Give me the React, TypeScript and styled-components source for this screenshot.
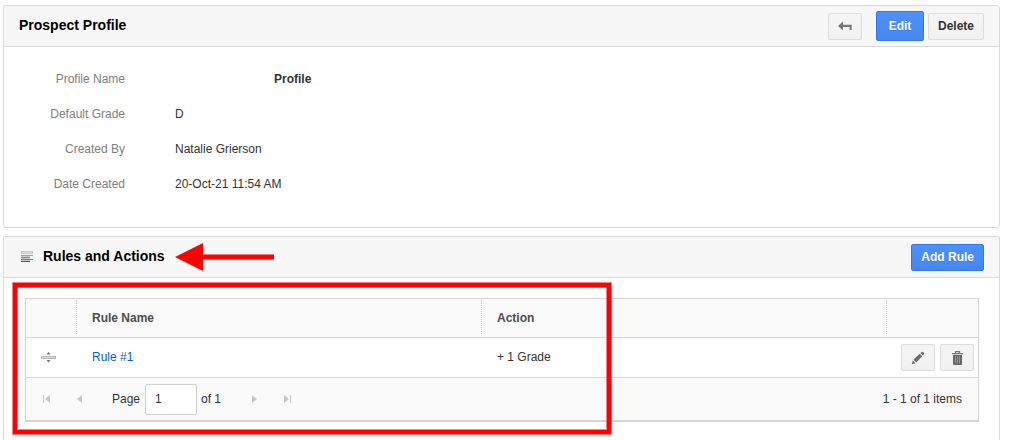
import React from "react";
import styled, { createGlobalStyle } from "styled-components";

const GlobalStyle = createGlobalStyle`
  *, *::before, *::after { box-sizing: border-box; }
  body {
    margin: 0;
    background: #fff;
    color: #333;
    font: 12px/16px "Liberation Sans", Arial, Helvetica, sans-serif;
  }
`;

const Page = styled.main`
  display: flex;
  flex-direction: column;
  gap: 8px;
  min-height: 100vh;
  padding: 5px 10px 0 3px;
`;

const Panel = styled.section<{ $open?: boolean }>`
  border: 1px solid #d9d9d9;
  border-radius: 3px;
  ${(p) => p.$open && "flex: 1; border-bottom: 0; border-bottom-left-radius: 0; border-bottom-right-radius: 0;"}
`;

const PanelHeader = styled.header`
  display: flex;
  align-items: center;
  height: 41px;
  padding: 0 15px;
  background: #f7f7f7;
  border-bottom: 1px solid #d9d9d9;
  border-radius: 2px 2px 0 0;
`;

const Title = styled.h2`
  margin: 0;
  padding-bottom: 2px;
  color: #000;
  font-size: 14px;
  line-height: 20px;
  font-weight: bold;
`;

const ListIcon = styled.svg`
  margin: 0 9px 0 2px;
`;

const Arrow = styled.svg`
  margin-left: 10px;
`;

const Actions = styled.div`
  display: flex;
  align-items: center;
  gap: 4px;
  margin-left: auto;
`;

const Button = styled.button<{ $primary?: boolean; $tall?: boolean }>`
  display: inline-flex;
  align-items: center;
  justify-content: center;
  height: ${(p) => (p.$tall ? 30 : 27)}px;
  padding: 0 9px;
  border: 1px solid ${(p) => (p.$primary ? "#3079ed" : "#dcdcdc")};
  border-radius: 2px;
  background: ${(p) =>
    p.$primary
      ? "linear-gradient(#4d90fe, #4787ed)"
      : "linear-gradient(#f5f5f5, #f1f1f1)"};
  color: ${(p) => (p.$primary ? "#fff" : "#333")};
  font: bold 12px/16px "Liberation Sans", Arial, Helvetica, sans-serif;
  white-space: nowrap;
  cursor: pointer;
  ${(p) => p.$primary && "text-shadow: 0 1px rgba(0, 0, 0, 0.1);"}
  ${(p) => p.$tall && "min-width: 48px; padding: 0 11px;"}
`;

const IconButton = styled(Button)`
  width: 34px;
  padding: 0;
`;

const BackButton = styled(IconButton)`
  margin-right: 10px;
`;

const Details = styled.dl`
  display: grid;
  grid-template-columns: 121px 1fr;
  column-gap: 50px;
  margin: 0;
  padding: 15px 0 25px;
  line-height: 35px;
`;

const Label = styled.dt`
  color: #808080;
  text-align: right;
`;

const Value = styled.dd`
  margin: 0;
`;

const ProfileName = styled.strong`
  margin-left: 99px;
`;

const PanelBody = styled.div`
  position: relative;
  padding: 20px 20px 0 21px;
`;

const Grid = styled.div`
  border: 1px solid #d5d5d5;
  border-bottom-width: 2px;
`;

const Table = styled.table`
  width: 100%;
  table-layout: fixed;
  border-collapse: separate;
  border-spacing: 0;
`;

const IconCol = styled.col`
  width: 51px;
`;

const ToolsCol = styled.col`
  width: 91px;
`;

const Th = styled.th`
  height: 39px;
  padding: 1px 0 3px;
  background: #fafafa;
  border-bottom: 1px solid #d5d5d5;
  color: #4d4d4d;
  text-align: left;

  & > div {
    display: flex;
    align-items: center;
    height: 34px;
    padding: 2px 15px 0;
    border-right: 1px dotted #ccc;
  }
  &:last-child > div {
    border-right: 0;
  }
`;

const Td = styled.td`
  height: 40px;
  padding: 0 15px;
  border-bottom: 1px solid #d9d9d9;
`;

const TextTd = styled(Td)`
  padding-bottom: 2px;
`;

const ToolsTd = styled(Td)`
  padding: 0 4px;
`;

const Tools = styled.div`
  display: flex;
  justify-content: flex-end;
  gap: 5px;
`;

const DragHandle = styled.svg`
  display: block;
`;

const Link = styled.a`
  color: #0b5cc4;
  text-decoration: none;
`;

const Pager = styled.nav`
  display: flex;
  align-items: center;
  height: 42px;
  padding: 0 16px 0 4px;
  background: #fafafa;
`;

const PagerButton = styled.button`
  display: flex;
  align-items: center;
  justify-content: center;
  width: 33px;
  height: 28px;
  padding: 0;
  border: 0;
  background: none;
`;

const PageLabel = styled.label`
  display: flex;
  align-items: center;
  gap: 5px;
  margin: 0 4px 0 16px;
`;

const PageInput = styled.input`
  width: 52px;
  height: 31px;
  padding: 0 9px;
  border: 1px solid #d0d0d0;
  border-radius: 2px;
  background: #fff;
  color: #333;
  font: 12px/16px "Liberation Sans", Arial, Helvetica, sans-serif;
`;

const PageTotal = styled.span`
  margin-right: 16px;
`;

const ItemCount = styled.span`
  margin-left: auto;
`;

const Highlight = styled.div`
  position: absolute;
  top: 5px;
  left: 9px;
  width: 598px;
  height: 151px;
  border: 4px solid #f00;
  box-shadow: 0 0 0 1px rgba(255, 0, 0, 0.5), inset 0 0 0 1px rgba(255, 0, 0, 0.5);
  pointer-events: none;
`;

const details = [
  { label: "Default Grade", value: "D" },
  { label: "Created By", value: "Natalie Grierson" },
  { label: "Date Created", value: "20-Oct-21 11:54 AM" },
];

function PagerIcon({ d, bar }: { d: string; bar?: number }) {
  return (
    <svg width="10" height="10" viewBox="0 0 10 10" fill="#c8c8c8" aria-hidden="true">
      <path d={d} />
      {bar !== undefined && <rect x={bar} y="1" width="1" height="8" />}
    </svg>
  );
}

export default function App() {
  return (
    <>
      <GlobalStyle />
      <Page>
        <Panel>
          <PanelHeader>
            <Title>Prospect Profile</Title>
            <Actions>
              <BackButton aria-label="Back">
                <svg width="16" height="12" viewBox="0 0 16 12" aria-hidden="true">
                  <path d="M1 6 6 1.5V4.7H14.7V10H12.6V7H6V10.5Z" fill="#777" />
                </svg>
              </BackButton>
              <Button $primary $tall>Edit</Button>
              <Button>Delete</Button>
            </Actions>
          </PanelHeader>
          <Details>
            <Label>Profile Name</Label>
            <Value>
              <ProfileName>Profile</ProfileName>
            </Value>
            {details.map((d) => (
              <React.Fragment key={d.label}>
                <Label>{d.label}</Label>
                <Value>{d.value}</Value>
              </React.Fragment>
            ))}
          </Details>
        </Panel>

        <Panel $open>
          <PanelHeader>
            <ListIcon width="13" height="12" viewBox="0 0 13 12" aria-hidden="true">
              <rect x="0.5" y="0.5" width="11" height="2" fill="#e4e4e4" stroke="#c8c8c8" />
              <path d="M0 4.5H12" stroke="#a0a0a0" />
              <path d="M0 6.5H9" stroke="#8c8c8c" />
              <path d="M0 8.5H12" stroke="#777" />
              <path d="M0 10.5H9" stroke="#555" />
              <path d="M0 5.5H9M0 7.5H9M0 9.5H9" stroke="#ccc" />
            </ListIcon>
            <Title>Rules and Actions</Title>
            <Arrow width="100" height="30" viewBox="0 0 100 30" fill="#f00" aria-hidden="true">
              <path d="M0 15 28 1V12.5H99V17.5H28V29Z" />
            </Arrow>
            <Actions>
              <Button $primary>Add Rule</Button>
            </Actions>
          </PanelHeader>
          <PanelBody>
            <Grid>
              <Table>
                <colgroup>
                  <IconCol />
                  <col />
                  <col />
                  <ToolsCol />
                </colgroup>
                <thead>
                  <tr>
                    <Th aria-label="Order"><div /></Th>
                    <Th><div>Rule Name</div></Th>
                    <Th><div>Action</div></Th>
                    <Th aria-label="Tools"><div /></Th>
                  </tr>
                </thead>
                <tbody>
                  <tr>
                    <Td>
                      <DragHandle width="16" height="11" viewBox="0 0 16 11" aria-hidden="true">
                        <path d="M7.5 0 9.5 2.5H5.5ZM7.5 10.5 9.5 8H5.5Z" fill="#777" />
                        <rect x="0.5" y="4.5" width="14" height="2" fill="#ddd" stroke="#b5b5b5" />
                      </DragHandle>
                    </Td>
                    <TextTd><Link href="#rule-1">Rule #1</Link></TextTd>
                    <TextTd>+ 1 Grade</TextTd>
                    <ToolsTd>
                      <Tools>
                        <IconButton aria-label="Edit rule">
                          <svg width="14" height="14" viewBox="0 0 14 14" fill="#6b6b6b" aria-hidden="true">
                            <path d="M.8 13.2 1.8 9.4 4.6 12.2ZM2.5 8.6 8.7 2.8 11.2 5.3 5.2 11.5ZM9.4 2.1 10.8.9Q11.6.4 12.5 1.3 13.5 2.3 12.9 3.3L11.9 4.6Z" />
                          </svg>
                        </IconButton>
                        <IconButton aria-label="Delete rule">
                          <svg width="13" height="14" viewBox="0 0 13 14" aria-hidden="true">
                            <path d="M4.5 2V.7H8.5V2M1 2.6H12" fill="none" stroke="#777" strokeWidth="1.3" />
                            <path d="M2 4H11V13Q11 14 10 14H3Q2 14 2 13Z" fill="#666" />
                            <path d="M4.5 5V12.5M6.5 5V12.5M8.5 5V12.5" stroke="#aaa" strokeWidth="0.7" />
                          </svg>
                        </IconButton>
                      </Tools>
                    </ToolsTd>
                  </tr>
                </tbody>
              </Table>
              <Pager aria-label="Rules pages">
                <PagerButton aria-label="First page" disabled>
                  <PagerIcon d="M8 1V9L3 5Z" bar={1} />
                </PagerButton>
                <PagerButton aria-label="Previous page" disabled>
                  <PagerIcon d="M7 1V9L2 5Z" />
                </PagerButton>
                <PageLabel>
                  Page
                  <PageInput type="text" defaultValue="1" />
                </PageLabel>
                <PageTotal>of 1</PageTotal>
                <PagerButton aria-label="Next page" disabled>
                  <PagerIcon d="M3 1V9L8 5Z" />
                </PagerButton>
                <PagerButton aria-label="Last page" disabled>
                  <PagerIcon d="M2 1V9L7 5Z" bar={8} />
                </PagerButton>
                <ItemCount>1 - 1 of 1 items</ItemCount>
              </Pager>
            </Grid>
            <Highlight />
          </PanelBody>
        </Panel>
      </Page>
    </>
  );
}
